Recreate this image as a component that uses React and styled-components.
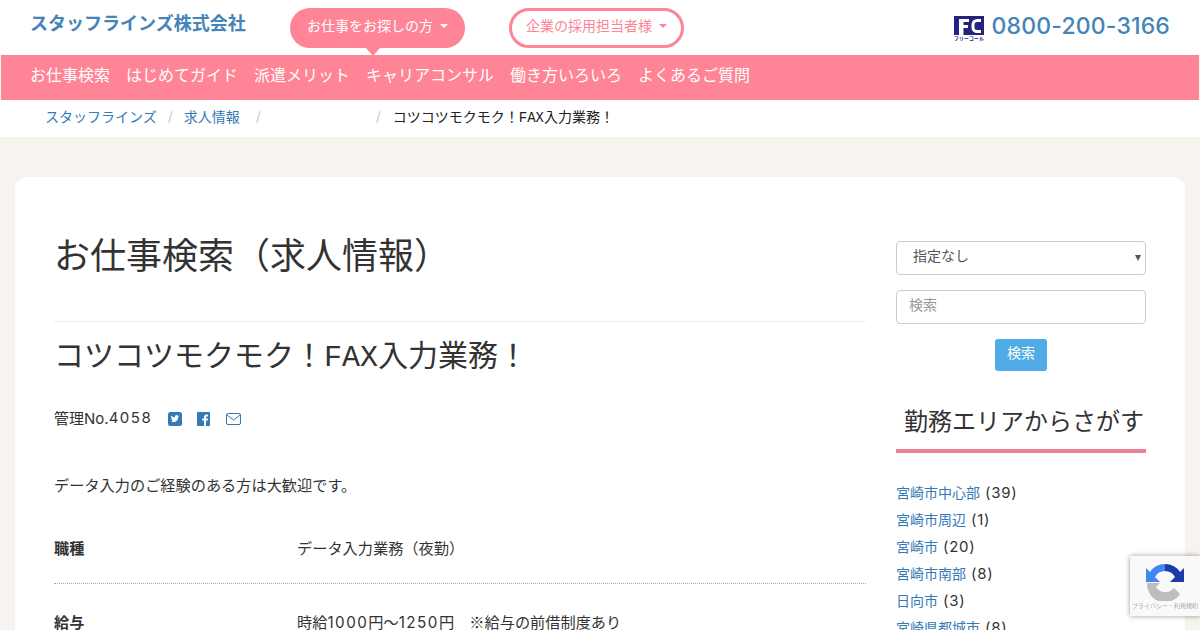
import React from 'react';
import styled, { createGlobalStyle } from 'styled-components';

const PINK = '#fe8496';
const BLUE = '#337ab7';
const JP = '"Noto Sans CJK JP", sans-serif';
const LATIN = 'Inter, "Noto Sans CJK JP", sans-serif';
const MONO = '"Liberation Mono", "Noto Sans CJK JP", monospace';

const GlobalStyle = createGlobalStyle`
  html, body {
    margin: 0;
    height: 630px;
    overflow: hidden;
    background: #f7f4ef;
    font-family: ${LATIN};
    color: #333;
  }
  * { box-sizing: border-box; }
`;

const Header = styled.header`
  display: flex;
  height: 55px;
  background: #fff;
  padding-left: 30px;
  padding-right: 30px;
`;

const Logo = styled.a`
  width: 260px;
  padding-top: 8px;
  font-family: ${JP};
  font-size: 18px;
  line-height: 28px;
  font-weight: 700;
  color: #4484b9;
`;

const Pill = styled.div`
  position: relative;
  display: flex;
  align-items: center;
  justify-content: center;
  gap: 7px;
  width: 175px;
  height: 40px;
  margin-top: 8px;
  margin-right: ${(p) => (p.$outline ? 0 : '44px')};
  padding-bottom: 7px;
  border-radius: 20px;
  font-family: ${JP};
  font-size: 14px;
  color: ${(p) => (p.$outline ? PINK : '#fff')};
  background: ${(p) => (p.$outline ? '#fff' : PINK)};
  border: ${(p) => (p.$outline ? `3px solid ${PINK}` : 'none')};
`;

const Caret = styled.span`
  width: 0;
  height: 0;
  margin-top: 3px;
  border-left: 4px solid transparent;
  border-right: 4px solid transparent;
  border-top: 4px solid currentColor;
`;

const PillTail = styled.span`
  position: absolute;
  left: 76px;
  bottom: -8px;
  width: 0;
  height: 0;
  border-left: 7px solid transparent;
  border-right: 7px solid transparent;
  border-top: 8px solid ${PINK};
`;

const Phone = styled.div`
  display: flex;
  align-items: flex-start;
  gap: 8px;
  margin-left: auto;
  padding-top: 12px;
  font-family: Inter, sans-serif;
  font-size: 23px;
  line-height: 28px;
  font-weight: 500;
  letter-spacing: 0.17px;
  color: #4484b9;
`;

const PhoneMark = styled.svg`
  margin-top: 4px;
  overflow: visible;
`;

const NavBar = styled.nav`
  display: flex;
  align-items: center;
  gap: 16px;
  height: 45px;
  margin: 0 1px;
  padding-left: 29px;
  padding-bottom: 8px;
  background: ${PINK};
`;

const NavLink = styled.a`
  font-family: ${JP};
  font-size: 16px;
  color: #fff;
`;

const Breadcrumb = styled.div`
  display: flex;
  align-items: center;
  height: 37px;
  padding-left: 45px;
  padding-bottom: 6px;
  background: #fff;
  font-family: ${JP};
  font-size: 14px;
`;

const Crumb = styled.a`
  color: ${BLUE};
`;

const Sep = styled.span`
  width: ${(p) => p.$w || 27}px;
  margin-left: ${(p) => p.$shift || 0}px;
  text-align: ${(p) => (p.$end ? 'right' : 'center')};
  padding-right: ${(p) => (p.$end ? '12px' : 0)};
  font-size: 12px;
  color: #bbb;
`;

const CrumbCurrent = styled.span`
  font-family: ${MONO};
  color: #222;
`;

const Card = styled.main`
  display: flex;
  gap: 30px;
  height: 453px;
  margin: 40px 15px 0;
  padding: 50px 39px 0;
  background: #fff;
  border-radius: 12px 12px 0 0;
  overflow: hidden;
`;

const Content = styled.section`
  width: 812px;
`;

const PageTitle = styled.h1`
  margin: 0;
  padding-bottom: 42px;
  border-bottom: 1px solid #eee;
  font-family: ${JP};
  font-size: 36px;
  line-height: 52px;
  font-weight: 400;
  color: #333;
`;

const JobTitle = styled.h2`
  margin: 15px 0 0;
  font-family: ${MONO};
  font-size: 30px;
  line-height: 42px;
  font-weight: 400;
  color: #333;
`;

const MetaRow = styled.div`
  display: flex;
  align-items: center;
  margin-top: 26px;
  height: 24px;
  font-size: 15px;
`;

const Num = styled.span`
  font-family: Inter, sans-serif;
  letter-spacing: 1.5px;
`;

const Count = styled(Num)`
  letter-spacing: 0.7px;
`;

const MetaIcons = styled.div`
  display: flex;
  align-items: center;
  gap: 15px;
  margin-left: 16px;
  padding-top: 4px;
`;

const Lead = styled.p`
  margin: 43px 0 14px;
  font-family: ${JP};
  font-size: 15.2px;
  line-height: 24px;
`;

const SpecRow = styled.div`
  display: flex;
  padding: 25px 0 24px;
  border-bottom: ${(p) => (p.$last ? 'none' : '1px dotted #aaa')};
  font-family: ${JP};
  font-size: 15.2px;
  line-height: 24px;
`;

const SpecLabel = styled.div`
  width: 243px;
  font-weight: 700;
`;

const Sidebar = styled.aside`
  width: 250px;
  padding-top: 14px;
`;

const SelectBox = styled.div`
  position: relative;
  height: 34px;
  padding-left: 16px;
  border: 1px solid #ccc;
  border-radius: 4px;
  font-family: ${JP};
  font-size: 14px;
  line-height: 26px;
  color: #555;
  &::after {
    content: '';
    position: absolute;
    right: 4px;
    top: 13px;
    border-left: 3px solid transparent;
    border-right: 3px solid transparent;
    border-top: 6px solid #555;
  }
`;

const SearchInput = styled.input`
  display: block;
  width: 100%;
  height: 34px;
  margin-top: 15px;
  padding: 0 12px 7px;
  border: 1px solid #ccc;
  border-radius: 4px;
  font-family: ${JP};
  font-size: 14px;
  outline: none;
  &::placeholder { color: #999; }
`;

const SearchButton = styled.button`
  display: block;
  width: 52px;
  height: 32px;
  margin: 15px auto 0;
  padding: 0 0 6px;
  border: none;
  border-radius: 3px;
  background: #50ace6;
  color: #fff;
  font-family: ${JP};
  font-size: 14px;
`;

const SideTitle = styled.h3`
  margin: 32px 0 0;
  padding-bottom: 12px;
  padding-left: 6px;
  border-bottom: 4px solid #ef8098;
  text-align: center;
  font-family: ${JP};
  font-size: 24px;
  line-height: 34px;
  font-weight: 400;
  color: #333;
  white-space: nowrap;
`;

const AreaList = styled.ul`
  list-style: none;
  margin: 26px 0 0;
  padding: 0;
`;

const AreaItem = styled.li`
  height: 27px;
  font-size: 15px;
  line-height: 27px;
  a {
    font-family: ${JP};
    font-size: 14px;
    color: ${BLUE};
    margin-right: 5px;
  }
`;

const Recaptcha = styled.div`
  position: fixed;
  right: 0;
  top: 556px;
  display: flex;
  flex-direction: column;
  align-items: center;
  gap: 1px;
  width: 70px;
  height: 60px;
  padding-top: 7px;
  background: #f9f9f9;
  box-shadow: 0 0 5px rgba(0, 0, 0, 0.4);
  font-family: ${JP};
  font-size: 6px;
  line-height: 8px;
  color: #aaa;
  white-space: nowrap;
`;

const FreeCallIcon = () => (
  <PhoneMark width="30" height="24" viewBox="0 0 30 24">
    <rect width="30" height="19" fill="#23237f" />
    <path d="M5 3h10v3H9.500v3H14v3H9.500v7H5z" fill="#fff" />
    <path d="M27 4.500h-4a4 4 0 0 0-4 4v3a4 4 0 0 0 4 4h4" fill="none" stroke="#fff" strokeWidth="3" />
    <text x="15" y="24" textAnchor="middle" fontSize="4.800" fontWeight="700" fill="#23237f" fontFamily={JP}>フリーコール</text>
  </PhoneMark>
);

const TwitterIcon = () => (
  <svg width="14" height="14" viewBox="0 0 14 14">
    <rect width="14" height="14" rx="2.500" fill={BLUE} />
    <path d="M11.300 4.200c-.3.100-.7.200-1 .3.400-.2.600-.6.800-1-.3.200-.7.400-1.100.4a1.700 1.700 0 0 0-3 1.600C5.500 5.400 4.200 4.700 3.300 3.600c-.5.800-.2 1.800.5 2.300-.3 0-.5-.1-.8-.2 0 .8.600 1.500 1.400 1.700-.3.100-.5.100-.8 0 .2.700.9 1.200 1.600 1.200-.7.600-1.600.8-2.500.7a4.900 4.900 0 0 0 7.500-4.300c.4-.2.800-.5 1.100-.8z" fill="#fff" />
  </svg>
);

const FacebookIcon = () => (
  <svg width="14" height="14" viewBox="0 0 14 14">
    <rect width="13" height="14" rx="1" fill={BLUE} />
    <path d="M9 14V8.600h1.700l.3-2H9V5.400c0-.6.200-1 1-1h1.100V2.600C10.800 2.600 10.300 2.500 9.700 2.500 8.100 2.500 7 3.500 7 5.200v1.400H5.300v2H7V14z" fill="#fff" />
  </svg>
);

const MailIcon = () => (
  <svg width="15" height="12" viewBox="0 0 15 12" fill="none" stroke={BLUE} strokeWidth="1">
    <rect x="0.500" y="0.500" width="14" height="11" rx="1.500" />
    <path d="M1 2l6.500 5L14 2" />
  </svg>
);

const RecaptchaIcon = () => (
  <svg width="38" height="38" viewBox="0 0 38 38">
    <path d="M19 1a18 18 0 0 0-15 8L0 5v14h14l-5-5a11.500 11.500 0 0 1 10-6z" fill="#4285f4" />
    <path d="M19 1a18 18 0 0 1 15 8l4-4v14H24l5-5a11.500 11.500 0 0 0-10-6z" fill="#1c3aa9" />
    <path d="M1 20h13l-4 4a11 11 0 0 0 18 1l6 6a18 18 0 0 1-33-11z" fill="#bdbdbd" />
  </svg>
);

const NAV = ['お仕事検索', 'はじめてガイド', '派遣メリット', 'キャリアコンサル', '働き方いろいろ', 'よくあるご質問'];
const AREAS = [
  ['宮崎市中心部', 39],
  ['宮崎市周辺', 1],
  ['宮崎市', 20],
  ['宮崎市南部', 8],
  ['日向市', 3],
  ['宮崎県都城市', 8],
];

export default function App() {
  return (
    <>
      <GlobalStyle />
      <Header>
        <Logo>スタッフラインズ株式会社</Logo>
        <Pill>
          お仕事をお探しの方 <Caret />
          <PillTail />
        </Pill>
        <Pill $outline>
          企業の採用担当者様 <Caret />
        </Pill>
        <Phone>
          <FreeCallIcon />
          0800-200-3166
        </Phone>
      </Header>
      <NavBar>
        {NAV.map((label) => (
          <NavLink key={label}>{label}</NavLink>
        ))}
      </NavBar>
      <Breadcrumb>
        <Crumb>スタッフラインズ</Crumb>
        <Sep>/</Sep>
        <Crumb>求人情報</Crumb>
        <Sep $shift={5}>/</Sep>
        <Sep $w={121} $end>/</Sep>
        <CrumbCurrent>コツコツモクモク！FAX入力業務！</CrumbCurrent>
      </Breadcrumb>
      <Card>
        <Content>
          <PageTitle>お仕事検索（求人情報）</PageTitle>
          <JobTitle>コツコツモクモク！FAX入力業務！</JobTitle>
          <MetaRow>
            管理No.<Num>4058</Num>
            <MetaIcons>
              <TwitterIcon />
              <FacebookIcon />
              <MailIcon />
            </MetaIcons>
          </MetaRow>
          <Lead>データ入力のご経験のある方は大歓迎です。</Lead>
          <SpecRow>
            <SpecLabel>職種</SpecLabel>
            <div>データ入力業務（夜勤）</div>
          </SpecRow>
          <SpecRow $last>
            <SpecLabel>給与</SpecLabel>
            <div>
              時給<Num>1000</Num>円～<Num>1250</Num>円　※給与の前借制度あり
            </div>
          </SpecRow>
        </Content>
        <Sidebar>
          <SelectBox>指定なし</SelectBox>
          <SearchInput placeholder="検索" />
          <SearchButton>検索</SearchButton>
          <SideTitle>勤務エリアからさがす</SideTitle>
          <AreaList>
            {AREAS.map(([name, count]) => (
              <AreaItem key={name}>
                <a>{name}</a>
                <Count>({count})</Count>
              </AreaItem>
            ))}
          </AreaList>
        </Sidebar>
      </Card>
      <Recaptcha>
        <RecaptchaIcon />
        プライバシー・利用規約
      </Recaptcha>
    </>
  );
}
